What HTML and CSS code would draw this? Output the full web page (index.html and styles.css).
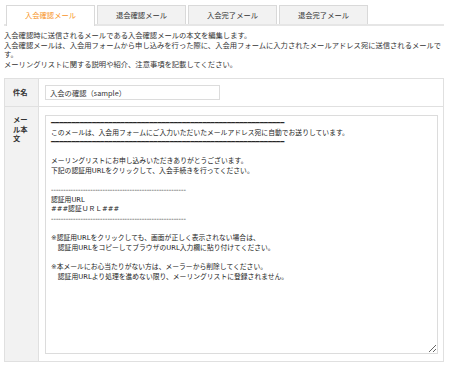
FILE: index.html
```html
<!DOCTYPE html>
<html lang="ja">
<head>
    <meta charset="UTF-8">
    <title>メール設定</title>
    <link rel="stylesheet" href="styles.css">
</head>
<body>
    <!-- tabs -->
    <ul class="tabs">
        <li class="tab active">入会確認メール</li>
        <li class="tab">退会確認メール</li>
        <li class="tab">入会完了メール</li>
        <li class="tab">退会完了メール</li>
    </ul>

    <div class="desc">
        入会確認時に送信されるメールである入会確認メールの本文を編集します。<br>
        入会確認メールは、入会用フォームから申し込みを行った際に、入会用フォームに入力されたメールアドレス宛に送信されるメールです。<br>
        メーリングリストに関する説明や紹介、注意事項を記載してください。
    </div>

    <table class="form">
        <tr>
            <th>件名</th>
            <td><input type="text" class="subject" value="入会の確認（sample）"></td>
        </tr>
        <tr>
            <th class="top">メール本文</th>
            <td>
<textarea class="body">━━━━━━━━━━━━━━━━━━━━━━━━━━━━━━━━━━━━━━━━━━━━━━━━━━━━━━━━━
このメールは、入会用フォームにご入力いただいたメールアドレス宛に自動でお送りしています。
━━━━━━━━━━━━━━━━━━━━━━━━━━━━━━━━━━━━━━━━━━━━━━━━━━━━━━━━━

メーリングリストにお申し込みいただきありがとうございます。
下記の認証用URLをクリックして、入会手続きを行ってください。

-------------------------------------------------------
認証用URL
###認証ＵＲＬ###
-------------------------------------------------------

※認証用URLをクリックしても、画面が正しく表示されない場合は、
　認証用URLをコピーしてブラウザのURL入力欄に貼り付けてください。

※本メールにお心当たりがない方は、メーラーから削除してください。
　認証用URLより処理を進めない限り、メーリングリストに登録されません。</textarea>
            </td>
        </tr>
    </table>
</body>
</html>
```
FILE: styles.css
```css
/* page */
body {
    margin: 0;
    padding: 5px 6px 0 4px;
    font-family: "Noto Sans CJK JP", sans-serif;
    font-size: 7.3px;
    line-height: 9.5px;
    color: #333;
    background-color: #fff;
}

/* tabs */
.tabs {
    display: flex;
    gap: 2px;
    margin: 0;
    padding: 0 0 0 2px;
    list-style: none;
    border-bottom: 2px solid #e6e6e6;
}

.tab {
    width: 87px;
    height: 18px;
    line-height: 18px;
    text-align: center;
    background-color: #f2f2f2;
    border: 1px solid #d9d9d9;
    border-bottom: none;
}

.tab.active {
    background-color: #fff;
    color: #f7931e;
    margin-bottom: -2px;
    height: 20px;
}

/* description */
.desc {
    margin-top: 5px;
    margin-bottom: 9px;
}

/* form table */
.form {
    width: 100%;
    border-collapse: collapse;
    border: 1px solid #e0e0e0;
}

.form th,
.form td {
    border: 1px solid #e0e0e0;
    padding: 6px 5px 6px 6px;
}

.form th {
    width: 16px;
    background-color: #f2f2f2;
    font-weight: bold;
    text-align: left;
    padding: 0 9px 0 8px;
}

.form th.top {
    vertical-align: top;
    padding-top: 8px;
}

.subject {
    display: block;
    width: 175px;
    height: 15px;
    box-sizing: border-box;
    border: 1px solid #dcdcdc;
    padding: 0 4px;
    font-family: inherit;
    font-size: 7.3px;
    color: #333;
}

.body {
    display: block;
    width: 100%;
    height: 239px;
    margin: 2px 0 1px;
    box-sizing: border-box;
    border: 1px solid #dcdcdc;
    padding: 3px 5px;
    font-family: "DejaVu Sans", "Noto Sans CJK JP", sans-serif;
    font-size: 6.8px;
    line-height: 9.6px;
    color: #222;
    white-space: pre;
    overflow: hidden;
}
```
